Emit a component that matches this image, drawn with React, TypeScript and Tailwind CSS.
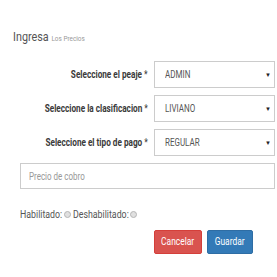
import React from "react";

const font = { fontFamily: 'Roboto, "Liberation Sans", sans-serif' };

function N({ children, o = "origin-left", s = "scale-x-[0.8]" }: { children: React.ReactNode; o?: string; s?: string }) {
  return <span className={`inline-block whitespace-nowrap ${o} ${s}`}>{children}</span>;
}

function Select({ value }: { value: string }) {
  return (
    <div className="flex h-[27px] w-[121px] items-center justify-between border border-[#ccc] bg-white pl-[10px] pr-[3px] text-[10px] text-[#555]">
      <N>{value}</N>
      <span className="text-[6px] text-[#222]">▼</span>
    </div>
  );
}

function Row({ label, value }: { label: string; value: string }) {
  return (
    <div className="flex items-center">
      <div className="w-[150px] pr-[2px] text-right text-[10px] font-bold text-[#3a3a3a]">
        <N o="origin-right" s="scale-x-[0.82]">
          {label} <span className="font-normal">*</span>
        </N>
      </div>
      <div className="ml-[4px]">
        <Select value={value} />
      </div>
    </div>
  );
}

function Radio() {
  return <span className="mx-[2px] inline-block h-[7px] w-[7px] shrink-0 rounded-full border border-[#b5b5b5] bg-[#e0e0e0]" />;
}

export default function App() {
  return (
    <div className="h-[277px] w-[277px] bg-white" style={font}>
      <div className="pl-[13px] pt-[26px] text-[13.5px] text-[#555]">
        <N>
          Ingresa <span className="text-[8px] text-[#999]">Los Precios</span>
        </N>
      </div>
      <div className="mt-[15px] flex flex-col gap-[7px]">
        <Row label="Seleccione el peaje" value="ADMIN" />
        <Row label="Seleccione la clasificacion" value="LIVIANO" />
        <Row label="Seleccione el tipo de pago" value="REGULAR" />
      </div>
      <div className="ml-[20px] mt-[7px] flex h-[26px] w-[255px] items-center border border-[#ccc] pl-[8px] text-[10px] text-[#999]">
        <N>Precio de cobro</N>
      </div>
      <div className="ml-[20px] mt-[18px] flex items-center text-[10px] text-[#555]">
        <span className="inline-block w-[42px] shrink-0"><N s="scale-x-[0.88]">Habilitado:</N></span>
        <Radio />
        <span className="inline-block w-[55px] shrink-0"><N s="scale-x-[0.88]">Deshabilitado:</N></span>
        <Radio />
      </div>
      <div className="ml-[154px] mt-[8px] flex gap-[5px]">
        <div className="flex h-[24px] w-[48px] items-center justify-center rounded-[2px] border border-[#d43f3a] bg-[#d9534f] text-[10.5px] text-white">
          <N o="origin-center">Cancelar</N>
        </div>
        <div className="flex h-[24px] w-[46px] items-center justify-center rounded-[2px] border border-[#2e6da4] bg-[#337ab7] text-[10.5px] text-white">
          <N o="origin-center">Guardar</N>
        </div>
      </div>
    </div>
  );
}
